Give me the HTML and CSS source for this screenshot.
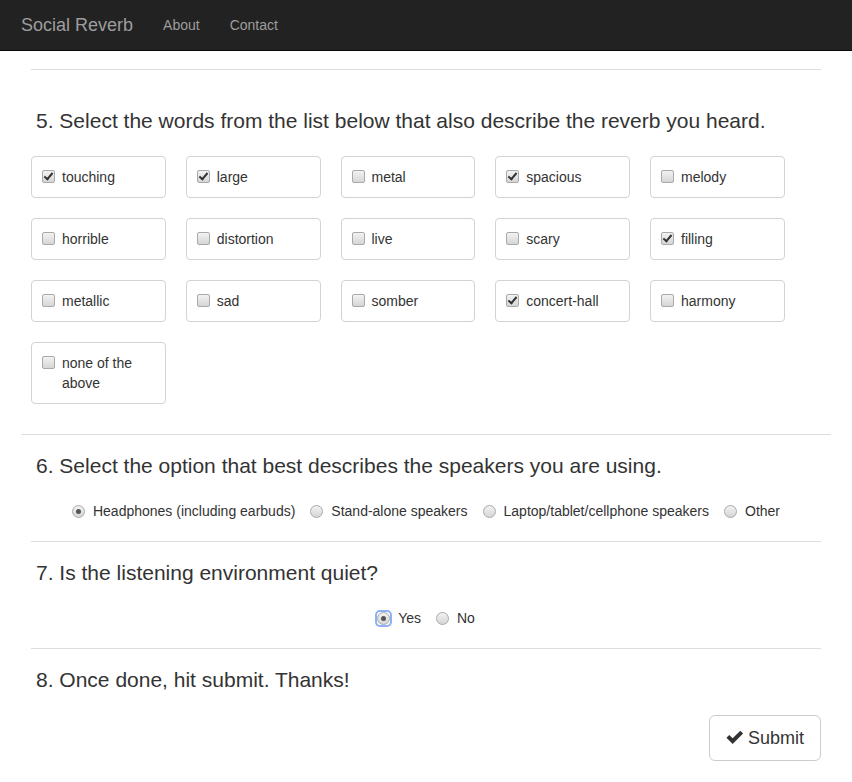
FILE: index.html
```
<!DOCTYPE html>
<html lang="en">
<head>
<meta charset="utf-8">
<title>Social Reverb</title>
<link rel="stylesheet" href="styles.css">
</head>
<body>
<nav class="navbar">
  <a class="brand" href="#">Social Reverb</a>
  <a class="nav-link" href="#">About</a>
  <a class="nav-link" href="#">Contact</a>
</nav>
<main class="page">
  <hr class="rule">
  <h4 class="q-title q-first">5. Select the words from the list below that also describe the reverb you heard.</h4>
  <div class="word-grid">
    <label class="word"><input type="checkbox" class="cb" checked><span>touching</span></label>
    <label class="word"><input type="checkbox" class="cb" checked><span>large</span></label>
    <label class="word"><input type="checkbox" class="cb"><span>metal</span></label>
    <label class="word"><input type="checkbox" class="cb" checked><span>spacious</span></label>
    <label class="word"><input type="checkbox" class="cb"><span>melody</span></label>
    <label class="word"><input type="checkbox" class="cb"><span>horrible</span></label>
    <label class="word"><input type="checkbox" class="cb"><span>distortion</span></label>
    <label class="word"><input type="checkbox" class="cb"><span>live</span></label>
    <label class="word"><input type="checkbox" class="cb"><span>scary</span></label>
    <label class="word"><input type="checkbox" class="cb" checked><span>filling</span></label>
    <label class="word"><input type="checkbox" class="cb"><span>metallic</span></label>
    <label class="word"><input type="checkbox" class="cb"><span>sad</span></label>
    <label class="word"><input type="checkbox" class="cb"><span>somber</span></label>
    <label class="word"><input type="checkbox" class="cb" checked><span>concert-hall</span></label>
    <label class="word"><input type="checkbox" class="cb"><span>harmony</span></label>
    <label class="word"><input type="checkbox" class="cb"><span>none of the above</span></label>
  </div>
  <hr class="rule rule-wide">
  <h4 class="q-title">6. Select the option that best describes the speakers you are using.</h4>
  <div class="radio-row">
    <label class="opt"><input type="radio" class="rd" name="spk" checked><span>Headphones (including earbuds)</span></label>
    <label class="opt"><input type="radio" class="rd" name="spk"><span>Stand-alone speakers</span></label>
    <label class="opt"><input type="radio" class="rd" name="spk"><span>Laptop/tablet/cellphone speakers</span></label>
    <label class="opt"><input type="radio" class="rd" name="spk"><span>Other</span></label>
  </div>
  <hr class="rule">
  <h4 class="q-title">7. Is the listening environment quiet?</h4>
  <div class="radio-row">
    <label class="opt"><span class="focus-ring"><input type="radio" class="rd" name="quiet" checked></span><span>Yes</span></label>
    <label class="opt"><input type="radio" class="rd" name="quiet"><span>No</span></label>
  </div>
  <hr class="rule">
  <h4 class="q-title">8. Once done, hit submit. Thanks!</h4>
  <div class="actions">
    <button class="btn-submit" type="button"><svg class="ok-icon" viewBox="0 0 20 16" width="18" height="15" aria-hidden="true"><path d="M0.5 8.2 L3.6 5.1 L7.4 8.9 L15.9 0.4 L19 3.5 L7.4 15.1 Z" fill="#333"/></svg>Submit</button>
  </div>
</main>
</body>
</html>
```
FILE: styles.css
```
* { box-sizing: border-box; }
html, body { margin: 0; padding: 0; }
body {
  font-family: "Liberation Sans", Arial, sans-serif;
  font-size: 14px;
  line-height: 20px;
  color: #333;
  background: #fff;
}
.navbar {
  display: flex;
  align-items: center;
  height: 51px;
  background: #222;
  border-bottom: 1px solid #080808;
  padding-left: 6px;
}
.brand {
  font-size: 18px;
  line-height: 20px;
  padding: 15px;
  color: #9d9d9d;
  text-decoration: none;
}
.nav-link {
  font-size: 14px;
  line-height: 20px;
  padding: 15px;
  color: #9d9d9d;
  text-decoration: none;
}
.page {
  padding: 18px 21px 20px;
}
.rule {
  border: 0;
  border-top: 1px solid #dedede;
  margin: 0 10px;
  height: 0;
}
.rule-wide { margin: 30px 0 0; }
.q-title {
  margin: 19px 0 24px;
  padding-left: 15px;
  font-size: 21px;
  line-height: 23px;
  font-weight: normal;
  color: #333;
}
.q-first { margin-top: 39px; margin-bottom: 24px; }
.word-grid {
  display: grid;
  grid-template-columns: repeat(5, 134.75px);
  column-gap: 20px;
  row-gap: 20px;
  margin-left: 10px;
  align-items: start;
}
.word {
  display: flex;
  align-items: flex-start;
  border: 1px solid #d3d3d3;
  border-radius: 4px;
  padding: 10px;
  min-height: 42px;
  cursor: pointer;
}
.cb, .rd {
  -webkit-appearance: none;
  appearance: none;
  flex: none;
  width: 13px;
  height: 13px;
  margin: 3px 7px 0 0;
  border: 1px solid #a9a9a9;
  background: linear-gradient(#f2f2f2, #d6d6d6);
  position: relative;
}
.cb { border-radius: 2px; }
.cb:checked::after {
  content: "";
  position: absolute;
  left: 3px;
  top: 0px;
  width: 3px;
  height: 7px;
  border-right: 2px solid #333;
  border-bottom: 2px solid #333;
  transform: rotate(40deg);
}
.rd { border-radius: 50%; margin: 0 8px 0 0; }
.rd:checked::after {
  content: "";
  position: absolute;
  left: 3px;
  top: 3px;
  width: 5px;
  height: 5px;
  border-radius: 50%;
  background: #555;
}
.radio-row {
  display: flex;
  justify-content: center;
  gap: 15px;
  margin-bottom: 20px;
}
.opt {
  display: inline-flex;
  align-items: center;
  line-height: 20px;
  cursor: pointer;
}
.focus-ring {
  display: inline-flex;
  width: 13px;
  height: 13px;
  margin-right: 8px;
  border-radius: 3px;
  box-shadow: 0 0 0 2px #8db1f4;
}
.focus-ring .rd { margin: 0; }
.actions {
  display: flex;
  justify-content: flex-end;
  padding-right: 10px;
  margin-top: 22px;
}
.btn-submit {
  display: inline-flex;
  align-items: center;
  gap: 4px;
  font-family: "Liberation Sans", Arial, sans-serif;
  font-size: 18px;
  line-height: 24px;
  color: #333;
  background: #fff;
  border: 1px solid #ccc;
  border-radius: 6px;
  padding: 10px 16px;
  cursor: pointer;
}
.ok-icon { display: block; margin-top: -2px; }
```
